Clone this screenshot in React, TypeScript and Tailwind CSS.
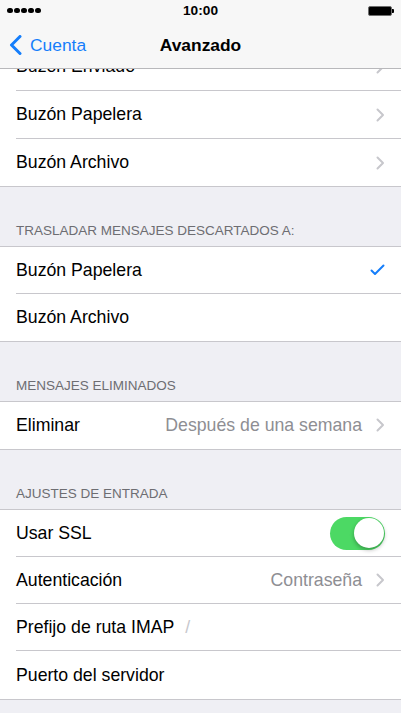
import React from "react";

const font = { fontFamily: '"Liberation Sans", Arial, sans-serif' };

function Chevron() {
  return (
    <svg width="9" height="14" viewBox="0 0 9 14" className="shrink-0">
      <polyline points="1.5,1.5 7,7 1.5,12.5" fill="none" stroke="#c7c7cc" strokeWidth="2" strokeLinecap="round" strokeLinejoin="round" />
    </svg>
  );
}

function Check() {
  return (
    <svg width="15" height="12" viewBox="0 0 15 12" className="shrink-0">
      <polyline points="1.5,6.5 5,10 13.5,1.5" fill="none" stroke="#157efb" strokeWidth="2" strokeLinecap="round" strokeLinejoin="round" />
    </svg>
  );
}

function Row({
  label,
  last,
  h = "h-[47px]",
  children,
}: {
  label: string;
  last?: boolean;
  h?: string;
  children?: React.ReactNode;
}) {
  return (
    <div className={`${h} pl-4 bg-white`}>
      <div className={`h-full flex items-center pr-4 ${last ? "" : "border-b border-[#c8c7cc]"}`}>
        <span className="text-[17.7px] text-black whitespace-nowrap">{label}</span>
        <div className="flex-1 flex items-center justify-end">{children}</div>
      </div>
    </div>
  );
}

function Header({ text }: { text: string }) {
  return (
    <div className="h-[59px] flex items-end pl-4 pb-[7px]">
      <span className="text-[13.5px] leading-[16px] text-[#6d6d72] whitespace-nowrap">{text}</span>
    </div>
  );
}

function Group({ children }: { children: React.ReactNode }) {
  return <div className="bg-white border-y border-[#c8c7cc]">{children}</div>;
}

export default function App() {
  return (
    <div className="w-[401px] h-[713px] overflow-hidden bg-[#efeff4] relative" style={font}>
      {/* Top bars */}
      <div className="relative z-10 bg-[#f7f7f7] border-b border-[#b8b8bb]">
        <div className="h-[21px] flex items-center justify-between px-[7px]">
          <div className="flex items-center gap-[1.5px] w-[60px]">
            {[0, 1, 2, 3, 4].map((i) => (
              <div key={i} className="w-[5.5px] h-[5.5px] rounded-full bg-black" />
            ))}
          </div>
          <span className="text-[13.7px] font-bold text-black leading-none">10:00</span>
          <div className="w-[60px] flex justify-end items-center">
            <div className="w-[24px] h-[10px] border border-[#6e6e6e] rounded-[2px] bg-black" />
            <div className="w-[2px] h-[4px] bg-black rounded-r-[1px]" />
          </div>
        </div>
        <div className="h-[47px] relative flex items-center pt-[2px]">
          <div className="flex items-center pl-[9px] text-[#157efb]">
            <svg width="13" height="20" viewBox="0 0 13 20">
              <polyline points="11,1.5 2.5,10 11,18.5" fill="none" stroke="#157efb" strokeWidth="3" strokeLinecap="round" strokeLinejoin="round" />
            </svg>
            <span className="ml-[8px] text-[17.4px]">Cuenta</span>
          </div>
          <div className="absolute inset-0 pt-[2px] flex items-center justify-center pointer-events-none">
            <span className="text-[17.4px] font-semibold text-black">Avanzado</span>
          </div>
        </div>
      </div>

      {/* Content */}
      <div className="-mt-[27px]">
        <Group>
          <Row label="Buzón Enviado" h="h-[48px]">
            <Chevron />
          </Row>
          <Row label="Buzón Papelera" h="h-[48px]">
            <Chevron />
          </Row>
          <Row label="Buzón Archivo" h="h-[47px]" last>
            <Chevron />
          </Row>
        </Group>

        <Header text="TRASLADAR MENSAJES DESCARTADOS A:" />
        <Group>
          <Row label="Buzón Papelera">
            <Check />
          </Row>
          <Row label="Buzón Archivo" last />
        </Group>

        <Header text="MENSAJES ELIMINADOS" />
        <Group>
          <Row label="Eliminar" last>
            <span className="text-[17.7px] text-[#8e8e93] mr-[14px] whitespace-nowrap">Después de una semana</span>
            <Chevron />
          </Row>
        </Group>

        <Header text="AJUSTES DE ENTRADA" />
        <Group>
          <Row label="Usar SSL">
            <div className="w-[55px] h-[33px] rounded-full bg-[#4cd964] relative">
              <div className="absolute right-[1.5px] top-[1.5px] w-[30px] h-[30px] rounded-full bg-white shadow-[0_2px_4px_rgba(0,0,0,0.3)]" />
            </div>
          </Row>
          <Row label="Autenticación">
            <span className="text-[17.7px] text-[#8e8e93] mr-[14px] whitespace-nowrap">Contraseña</span>
            <Chevron />
          </Row>
          <div className="h-[47px] pl-4 bg-white">
            <div className="h-full flex items-center pr-4 border-b border-[#c8c7cc]">
              <span className="text-[17.7px] text-black whitespace-nowrap">Prefijo de ruta IMAP</span>
              <span className="text-[17.7px] text-[#c7c7cd] ml-[11px]">/</span>
            </div>
          </div>
          <Row label="Puerto del servidor" h="h-[48px]" last />
        </Group>
      </div>
    </div>
  );
}
